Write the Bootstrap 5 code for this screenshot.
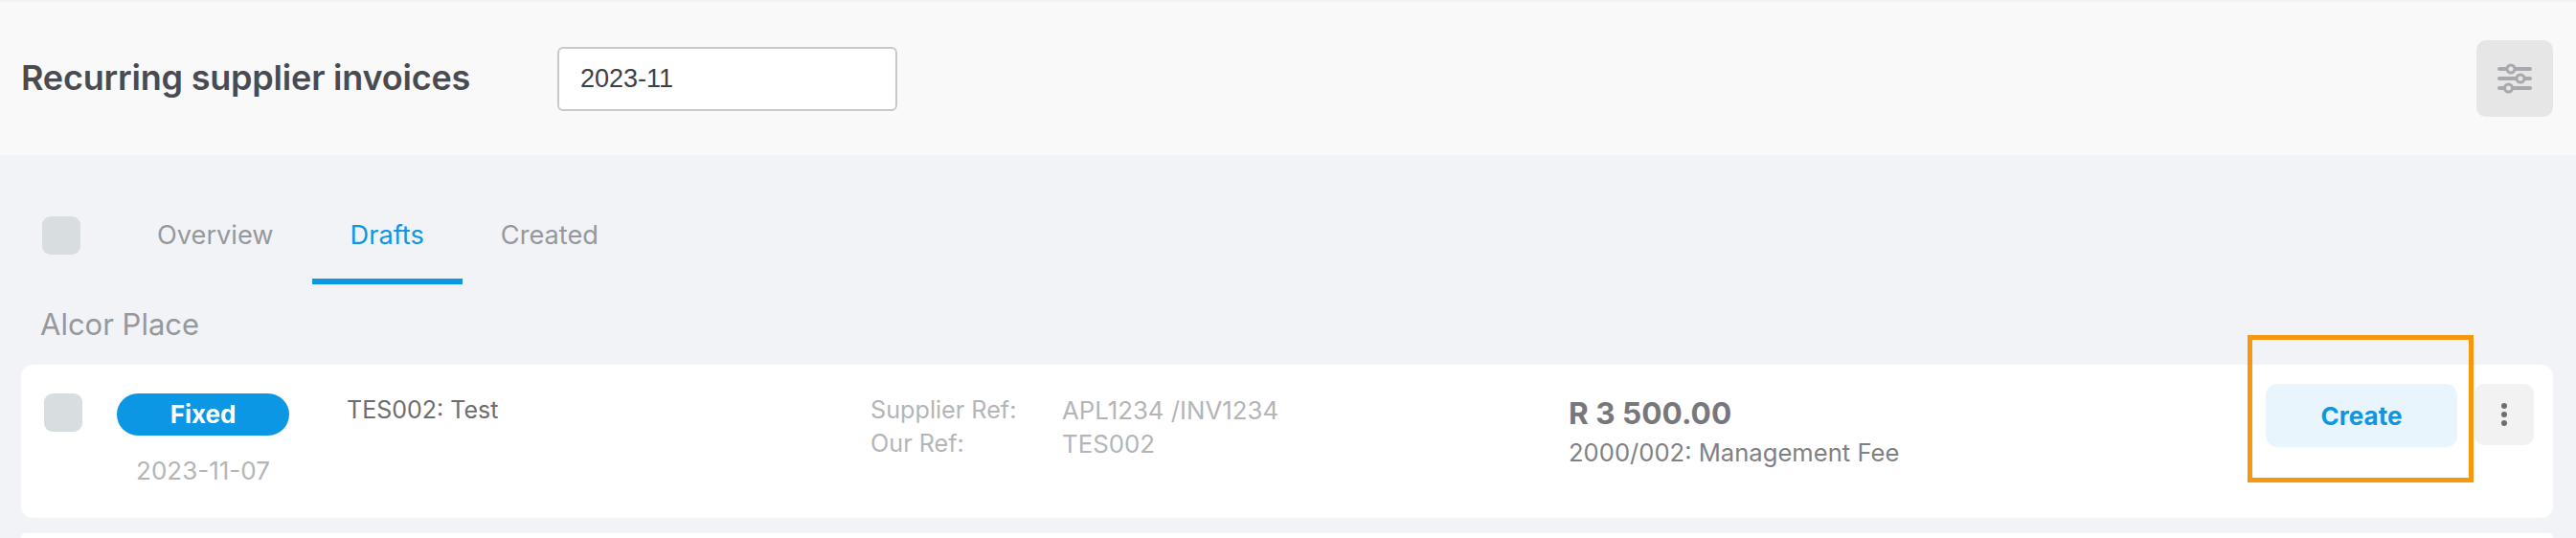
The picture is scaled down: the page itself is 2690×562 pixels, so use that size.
<!DOCTYPE html>
<html lang="en">
<head>
  <meta charset="UTF-8" />
  <meta name="viewport" content="width=device-width, initial-scale=1" />
  <title>Recurring supplier invoices</title>
  <link href="https://cdn.jsdelivr.net/npm/bootstrap@5.3.3/dist/css/bootstrap.min.css" rel="stylesheet" />
  <style>
    body { background: #f1f3f7; font-family: Inter, "Liberation Sans", sans-serif; overflow: hidden; }
    .page-head { margin-top: 2px; height: 160px; background: #f9f9f9; padding: 0 24px 0 22px; }
    .page-title { width: 560px; margin: 0; font-size: 36px; font-weight: 600; color: #4a4b50; letter-spacing: -0.2px; }
    .month-input { width: 355px; height: 67px; padding: 0 22px; border: 2px solid #c9c9c9; border-radius: 6px; font-family: "Liberation Sans", sans-serif; font-size: 27px; color: #3f4045; }
    .filter-btn { width: 80px; height: 80px; padding: 0; background: #e6e6e6; border: 0; border-radius: 10px; }
    .page-body { padding: 42px 24px 0 22px; }
    .tick-box { width: 40px; height: 40px; flex: none; background: #d8dde0; border-radius: 9px; }
    .tab-tick { margin: 22px 0 0 22px; }
    .tab-strip { margin-left: 40px; }
    .tab-strip .nav-link { padding: 26px 40px 29px; font-size: 27.2px; line-height: 32px; color: #96989b; border-bottom: 6px solid transparent; }
    .tab-strip .nav-link.active { color: #0b97e3; border-bottom-color: #0b97e3; }
    .group-name { margin: 24px 0 24px 20px; font-size: 31px; line-height: 36px; color: #96989b; }
    .invoice-card { height: 160px; padding: 30px 20px 0 24px; border: 0; border-radius: 12px; background: #fff; }
    .invoice-next { height: 5px; margin-top: 16px; border: 0; border-radius: 12px 12px 0 0; background: #fff; }
    .status-col { width: 180px; margin-left: 36px; flex: none; }
    .status-pill { display: block; height: 44px; line-height: 44px; padding: 0; background: #0b97e3; border-radius: 22px; font-size: 26px; font-weight: 700; color: #fff; }
    .status-date { margin-top: 20px; line-height: 34px; font-size: 26px; color: #b4b5b7; text-align: center; }
    .name-col { width: 547px; margin-left: 60px; flex: none; font-size: 25px; line-height: 34px; color: #6d6e71; }
    .ref-col { width: 729px; flex: none; font-size: 25.8px; line-height: 35px; color: #b4b5b7; }
    .ref-label { width: 200px; flex: none; font-size: 25.2px; }
    .amount-col { width: 728px; flex: none; padding-top: 3px; }
    .amount-value { font-size: 31.6px; line-height: 36px; font-weight: 700; color: #77787b; }
    .amount-code { margin-top: 6px; font-size: 25.6px; line-height: 34px; color: #808184; }
    .create-btn { width: 200px; height: 66px; flex: none; margin-top: -10px; padding: 0; border: 0; border-radius: 12px; background: #e8f5fd; font-size: 26px; font-weight: 700; color: #0b97e3; }
    .more-btn { width: 62px; height: 64px; flex: none; margin: -10px 0 0 18px; padding: 0; border: 0; border-radius: 10px; background: #f2f2f2; }
    .callout-box { position: absolute; left: 2347px; top: 350px; width: 236px; height: 154px; border: 5px solid #f7970f; pointer-events: none; }
  </style>
</head>
<body>
  <header class="page-head d-flex align-items-center">
    <h1 class="page-title">Recurring supplier invoices</h1>
    <input type="text" class="form-control month-input" value="2023-11" aria-label="Month" />
    <button type="button" class="btn filter-btn ms-auto d-flex align-items-center justify-content-center" aria-label="Filters">
      <svg width="36" height="32" viewBox="0 0 36 32" fill="none" aria-hidden="true">
        <g stroke="#a8a9ae" stroke-width="4" stroke-linecap="round">
          <path d="M2 6H34" /><path d="M2 16H34" /><path d="M2 26H34" />
        </g>
        <g fill="#e6e6e6" stroke="#a8a9ae" stroke-width="3">
          <circle cx="14" cy="6" r="4" /><circle cx="24" cy="16" r="4" /><circle cx="11.5" cy="26" r="4" />
        </g>
      </svg>
    </button>
  </header>

  <main class="page-body">
    <div class="d-flex align-items-start">
      <span class="tick-box tab-tick"></span>
      <ul class="nav tab-strip">
        <li class="nav-item"><a class="nav-link" href="#">Overview</a></li>
        <li class="nav-item"><a class="nav-link active" href="#">Drafts</a></li>
        <li class="nav-item"><a class="nav-link" href="#">Created</a></li>
      </ul>
    </div>

    <div class="group-name">Alcor Place</div>

    <div class="card invoice-card flex-row align-items-start">
      <span class="tick-box"></span>
      <div class="status-col">
        <span class="badge status-pill">Fixed</span>
        <div class="status-date">2023-11-07</div>
      </div>
      <div class="name-col">TES002: Test</div>
      <div class="ref-col">
        <div class="d-flex"><span class="ref-label">Supplier Ref:</span><span>APL1234 /INV1234</span></div>
        <div class="d-flex"><span class="ref-label">Our Ref:</span><span>TES002</span></div>
      </div>
      <div class="amount-col">
        <div class="amount-value">R 3 500.00</div>
        <div class="amount-code">2000/002: Management Fee</div>
      </div>
      <button type="button" class="btn create-btn">Create</button>
      <button type="button" class="btn more-btn d-flex align-items-center justify-content-center" aria-label="More">
        <svg width="8" height="26" viewBox="0 0 8 26" aria-hidden="true">
          <g fill="#6d6e71"><circle cx="4" cy="4" r="3" /><circle cx="4" cy="13" r="3" /><circle cx="4" cy="22" r="3" /></g>
        </svg>
      </button>
    </div>
    <div class="card invoice-next"></div>
  </main>

  <div class="callout-box"></div>
  <script src="https://cdn.jsdelivr.net/npm/bootstrap@5.3.3/dist/js/bootstrap.bundle.min.js"></script>
</body>
</html>
